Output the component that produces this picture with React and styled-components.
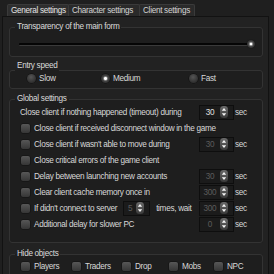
import React from "react";
import styled, { createGlobalStyle } from "styled-components";

const Global = createGlobalStyle`
  html, body { margin: 0; padding: 0; background: #1f1f1f; }
  body {
    font-family: "Liberation Sans", Arial, sans-serif;
    font-size: 8.2px;
    letter-spacing: -0.3px;
    color: #d8d8d8;
  }
  * { box-sizing: border-box; }
`;

const Window = styled.div`
  width: 274px;
  height: 274px;
  overflow: hidden;
  background: #1f1f1f;
  padding-top: 4px;
`;

const TabBar = styled.div`
  display: flex;
  padding-left: 7px;
  height: 12px;
`;

const Tab = styled.div`
  height: 12px;
  line-height: 12px;
  padding: 0 3px;
  white-space: nowrap;
  border: 1px solid #3a3a3a;
  border-bottom: none;
  border-radius: 2px 2px 0 0;
  margin-right: -1px;
  background: ${(p) => (p.$active ? "#2e2e2e" : "#2a2a2a")};
  color: ${(p) => (p.$active ? "#e4e4e4" : "#d4d4d4")};
  width: ${(p) => p.$w}px;
`;

const Panel = styled.div`
  margin: 0 5px 0 2px;
  border: 1px solid #121212;
  border-bottom: none;
  background: #222222;
  padding: 5px 5px 0 6px;
  height: 262px;
`;

const Group = styled.fieldset`
  margin: ${(p) => p.$mt || 0}px 0 0 0;
  padding: 0 0 ${(p) => p.$pb || 0}px 0;
  min-width: 0;
  border: 1px solid #333333;
  border-radius: 3px;
  background: #1e1e1e;
`;

const Legend = styled.legend`
  margin-left: 5px;
  padding: 0 2px ${(p) => p.$drop || 0}px 2px;
  line-height: 10px;
  color: #dadada;
`;

const SliderRow = styled.div`
  height: 24px;
  display: flex;
  align-items: center;
  padding: 0 11px 0 9px;
`;

const Track = styled.div`
  flex: 1;
  height: 3px;
  background: #050505;
  border-bottom: 1px solid #3a3a3a;
  border-radius: 1px;
  position: relative;
`;

const Thumb = styled.div`
  position: absolute;
  right: -4px;
  top: -3px;
  width: 8px;
  height: 8px;
  border-radius: 50%;
  background: radial-gradient(circle at 50% 50%, #ffffff 0 1px, #9a9a9a 1.5px, #4a4a4a 2.5px, #2c2c2c 4px);
  box-shadow: 0 0 1px #000;
`;

const RadioRow = styled.div`
  display: grid;
  grid-template-columns: 74px 88px auto;
  align-items: center;
  height: 10px;
  margin: -6px 0 5px 17px;
`;

const Option = styled.div`
  display: flex;
  align-items: center;
  gap: 3px;
  white-space: nowrap;
`;

const RadioDot = styled.span`
  width: 9px;
  height: 9px;
  border-radius: 50%;
  flex: none;
  background: ${(p) =>
    p.$checked
      ? "radial-gradient(circle at 50% 50%, #ffffff 0 1.2px, #8a8a8a 1.8px, #444 2.8px, #2e2e2e 4.5px)"
      : "radial-gradient(circle at 45% 35%, #555, #303030 70%)"};
  box-shadow: 0 0 0 0.5px #101010;
`;

const Box = styled.span`
  width: 9px;
  height: 9px;
  flex: none;
  border-radius: 2px;
  background: linear-gradient(#575757, #363636);
  box-shadow: 0 0 0 0.5px #111;
`;

const Rows = styled.div`
  display: flex;
  flex-direction: column;
`;

const Row = styled.div`
  display: grid;
  grid-template-columns: 1fr 35px 28px;
  align-items: center;
  height: 16px;
  padding-left: ${(p) => (p.$plain ? 10 : 11)}px;
  white-space: nowrap;
`;

const LabelLine = styled.div`
  display: flex;
  align-items: center;
  gap: 4px;
`;

const Inline = styled.span`
  margin-left: ${(p) => p.$ml || 0}px;
`;

const Sec = styled.span`
  padding-left: 1px;
`;

const SpinBox = styled.div`
  width: ${(p) => p.$w || 35}px;
  height: 15px;
  border: 1px solid #0e0e0e;
  background: #1b1b1b;
  display: flex;
  align-items: center;
  padding-right: 5px;
  flex: none;
  margin-left: ${(p) => p.$ml || 0}px;
`;

const SpinValue = styled.span`
  flex: 1;
  text-align: center;
  color: ${(p) => (p.$disabled ? "#5c5c5c" : "#e0e0e0")};
`;

const Arrows = () => (
  <svg width="8" height="12" viewBox="0 0 8 12" style={{ display: "block", flex: "none" }}>
    <defs>
      <linearGradient id="ag" x1="0" y1="0" x2="0" y2="1">
        <stop offset="0" stopColor="#6a6a6a" />
        <stop offset="1" stopColor="#3a3a3a" />
      </linearGradient>
    </defs>
    <rect x="0" y="0" width="8" height="12" rx="3.5" fill="url(#ag)" />
    <path d="M4 2 L6.2 4.8 L1.8 4.8 Z" fill="#f4f4f4" />
    <path d="M1.8 7.2 L6.2 7.2 L4 10 Z" fill="#f4f4f4" />
  </svg>
);

const Spin = ({ value, disabled, w, ml }) => (
  <SpinBox $w={w} $ml={ml}>
    <SpinValue $disabled={disabled}>{value}</SpinValue>
    <Arrows />
  </SpinBox>
);

const HideRow = styled.div`
  display: grid;
  grid-template-columns: 51px 50px 47px 45px auto;
  align-items: center;
  height: 10px;
  margin: 2px 0 0 11px;
`;

const Check = ({ children }) => (
  <LabelLine>
    <Box />
    <span>{children}</span>
  </LabelLine>
);

export default function App() {
  return (
    <>
      <Global />
      <Window>
        <TabBar>
          <Tab $active $w={62}>General settings</Tab>
          <Tab $w={72}>Character settings</Tab>
          <Tab $w={56}>Client settings</Tab>
        </TabBar>
        <Panel>
          <Group>
            <Legend>Transparency of the main form</Legend>
            <SliderRow>
              <Track>
                <Thumb />
              </Track>
            </SliderRow>
          </Group>

          <Group $mt={4}>
            <Legend $drop={8}>Entry speed</Legend>
            <RadioRow>
              <Option><RadioDot /><span>Slow</span></Option>
              <Option><RadioDot $checked /><span>Medium</span></Option>
              <Option><RadioDot /><span>Fast</span></Option>
            </RadioRow>
          </Group>

          <Group $mt={5} $pb={10}>
            <Legend>Global settings</Legend>
            <Rows>
              <Row $plain>
                <span>Close client if nothing happened (timeout) during</span>
                <Spin value="30" />
                <Sec>sec</Sec>
              </Row>
              <Row>
                <Check>Close client if received disconnect window in the game</Check>
              </Row>
              <Row>
                <Check>Close client if wasn't able to move during</Check>
                <Spin value="30" disabled />
                <Sec>sec</Sec>
              </Row>
              <Row>
                <Check>Close critical errors of the game client</Check>
              </Row>
              <Row>
                <Check>Delay between launching new accounts</Check>
                <Spin value="30" disabled />
                <Sec>sec</Sec>
              </Row>
              <Row>
                <Check>Clear client cache memory once in</Check>
                <Spin value="300" disabled />
                <Sec>sec</Sec>
              </Row>
              <Row>
                <LabelLine>
                  <Box />
                  <span>If didn't connect to server</span>
                  <Spin value="5" disabled w={27} ml={2} />
                  <Inline $ml={2}>times, wait</Inline>
                </LabelLine>
                <Spin value="300" disabled />
                <Sec>sec</Sec>
              </Row>
              <Row>
                <Check>Additional delay for slower PC</Check>
                <Spin value="0" disabled />
                <Sec>sec</Sec>
              </Row>
            </Rows>
          </Group>

          <Group $mt={6} $pb={10}>
            <Legend>Hide objects</Legend>
            <HideRow>
              <Check>Players</Check>
              <Check>Traders</Check>
              <Check>Drop</Check>
              <Check>Mobs</Check>
              <Check>NPC</Check>
            </HideRow>
          </Group>
        </Panel>
      </Window>
    </>
  );
}
